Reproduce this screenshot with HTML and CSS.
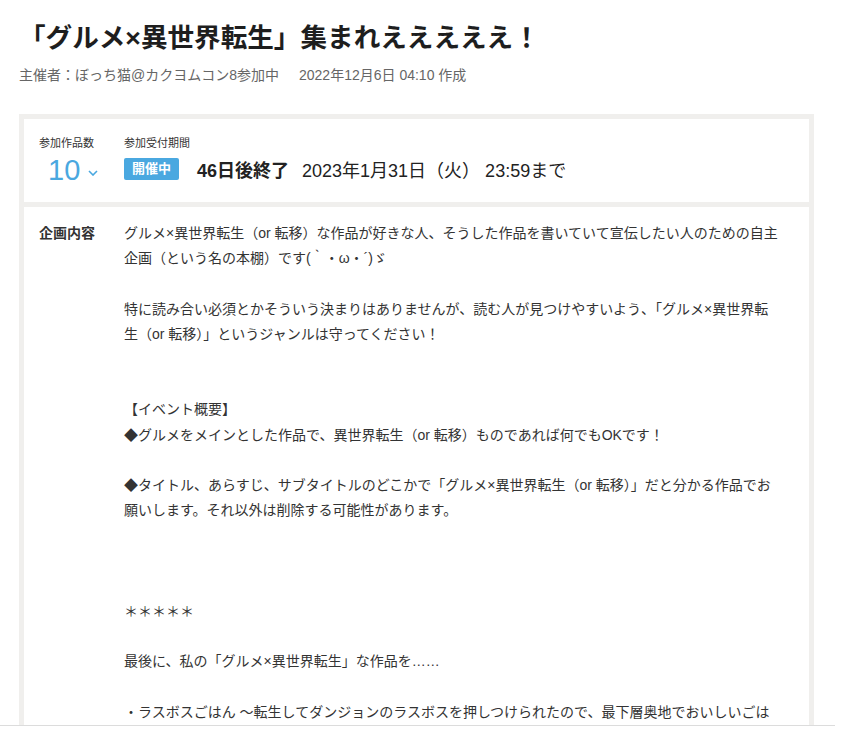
FILE: index.html
```html
<!DOCTYPE html>
<html lang="ja">
<head>
<meta charset="utf-8">
<title>「グルメ×異世界転生」集まれえええええ！</title>
<link rel="stylesheet" href="styles.css">
</head>
<body>
<main class="page">
  <header class="head">
    <h1 class="title">「グルメ×異世界転生」集まれえええええ！</h1>
    <p class="meta"><span class="host">主催者：ぼっち猫@カクヨムコン8参加中</span><span class="created">2022年12月6日 04:10 作成</span></p>
  </header>

  <section class="frame">
    <div class="card stats">
      <div class="stat count">
        <div class="stat-label">参加作品数</div>
        <div class="count-value">10<svg class="chev" width="10" height="6" viewBox="0 0 10 6"><path d="M1 1 L5 5 L9 1" fill="none" stroke="#4aa8e0" stroke-width="1.6"/></svg></div>
      </div>
      <div class="stat period">
        <div class="stat-label">参加受付期間</div>
        <div class="period-value"><span class="badge">開催中</span><span class="remain">46日後終了</span><span class="until">2023年1月31日（火） 23:59まで</span></div>
      </div>
    </div>

    <div class="card detail">
      <div class="detail-label">企画内容</div>
      <div class="detail-body">グルメ×異世界転生（or 転移）な作品が好きな人、そうした作品を書いていて宣伝したい人のための自主
企画（という名の本棚）です(｀・ω・´)ゞ

特に読み合い必須とかそういう決まりはありませんが、読む人が見つけやすいよう、「グルメ×異世界転
生（or 転移）」というジャンルは守ってください！


【イベント概要】
◆グルメをメインとした作品で、異世界転生（or 転移）ものであれば何でもOKです！

◆タイトル、あらすじ、サブタイトルのどこかで「グルメ×異世界転生（or 転移）」だと分かる作品でお
願いします。それ以外は削除する可能性があります。



＊＊＊＊＊

最後に、私の「グルメ×異世界転生」な作品を……

・ラスボスごはん ～転生してダンジョンのラスボスを押しつけられたので、最下層奥地でおいしいごは
ん作って暮らします～
</div>
    </div>
  </section>
</main>
<div class="bottom-bar"></div>
</body>
</html>
```
FILE: styles.css
```css
html, body {
  margin: 0;
  padding: 0;
  background: #fff;
}
body {
  font-family: "Liberation Sans", "Noto Sans CJK JP", sans-serif;
  color: #333;
  height: 754px;
  overflow: hidden;
}
.page {
  padding: 20px 27px 0 19px;
}
.title {
  margin: 0;
  font-size: 26.6px;
  line-height: 36px;
  font-weight: bold;
  color: #1e1e1e;
  white-space: nowrap;
}
.meta {
  margin: 9px 0 0;
  font-size: 14px;
  line-height: 20px;
  color: #666;
  display: flex;
  gap: 20px;
}
.frame {
  margin-top: 29px;
  background: #f0efed;
  padding: 5px;
  display: flex;
  flex-direction: column;
  gap: 5px;
}
.card {
  background: #fff;
}
.stats {
  display: flex;
  padding: 16px 15px 13px;
  height: 54px;
}
.stat-label {
  font-size: 11px;
  line-height: 16px;
  color: #333;
}
.count {
  width: 85px;
}
.count-value {
  display: flex;
  align-items: center;
  gap: 8px;
  padding-left: 9px;
  margin-top: 4px;
  font-size: 29px;
  line-height: 31px;
  color: #4aa8e0;
}
.chev {
  margin-top: 5px;
}
.period-value {
  display: flex;
  align-items: center;
  margin-top: 6px;
  height: 24px;
}
.badge {
  background: #4aa8e0;
  color: #fff;
  font-weight: bold;
  font-size: 13px;
  line-height: 22px;
  padding: 0 8px;
  border-radius: 2px;
  margin-right: 18px;
}
.remain {
  font-weight: bold;
  font-size: 18px;
  color: #222;
  margin-right: 13px;
}
.until {
  font-size: 18px;
  color: #222;
}
.detail {
  display: flex;
  padding: 14px 15px 0;
  height: 600px;
}
.detail-label {
  width: 85px;
  flex: none;
  font-size: 14px;
  font-weight: bold;
  line-height: 25.2px;
  color: #333;
}
.detail-body {
  width: 690px;
  font-size: 14px;
  line-height: 25.2px;
  color: #333;
  white-space: pre-wrap;
}
.bottom-bar {
  position: fixed;
  left: 0;
  bottom: 0;
  width: 835px;
  height: 28px;
  background: #fff;
  border-top: 1px solid #dcdcdc;
}
```
